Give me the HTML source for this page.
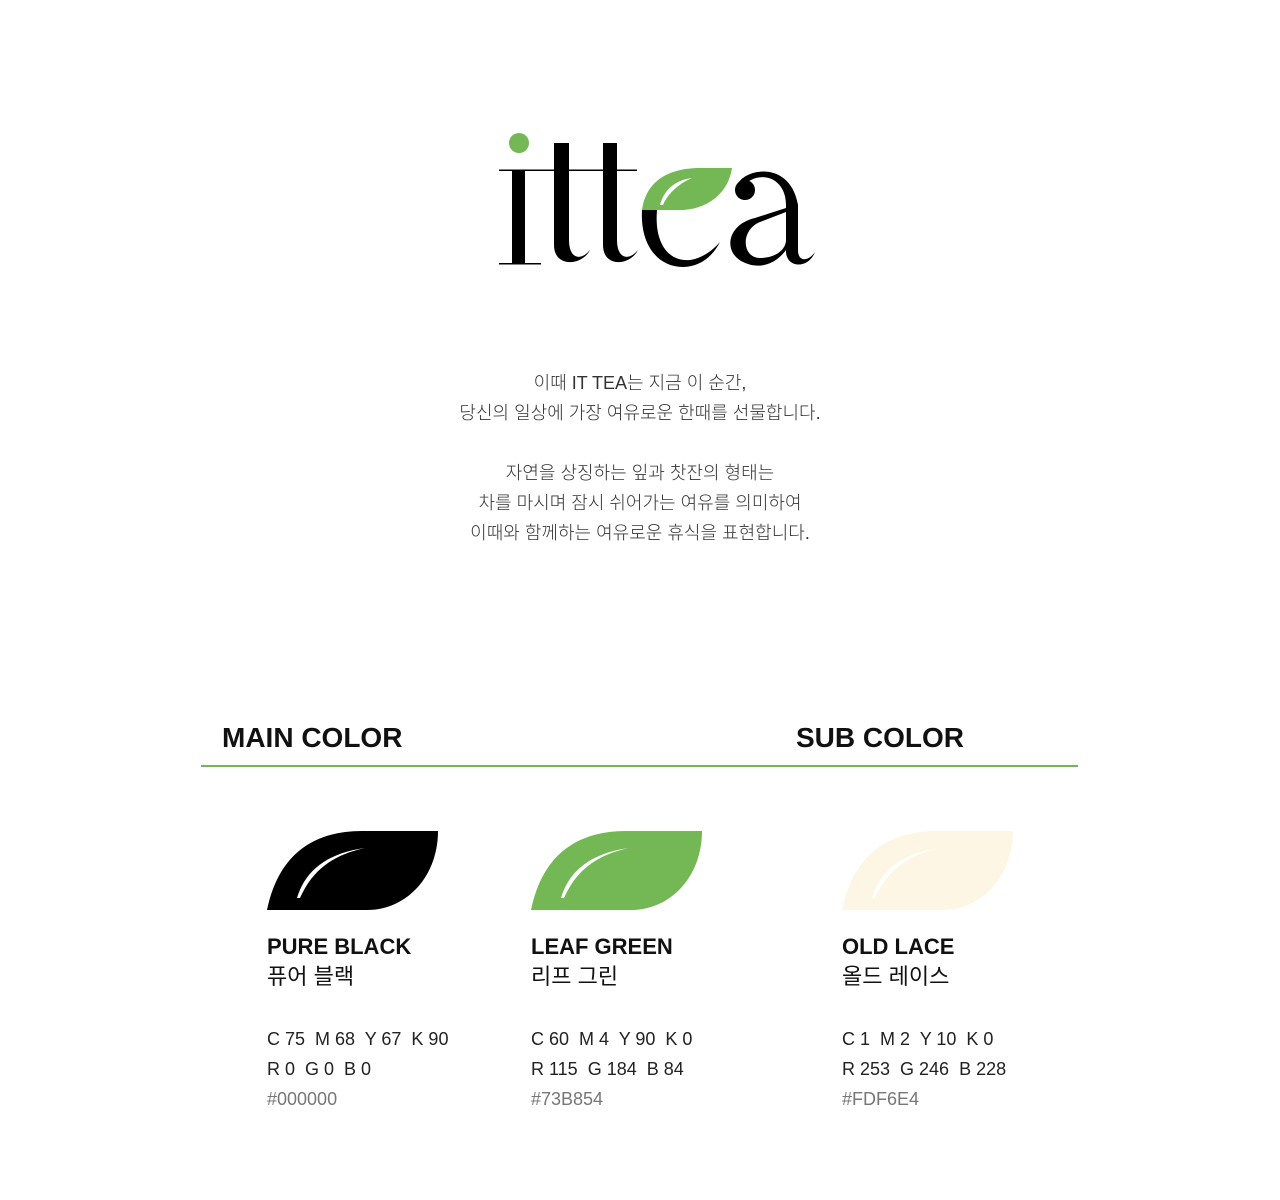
<!DOCTYPE html>
<html><head><meta charset="utf-8"><style>
body{margin:0;background:#fff;width:1280px;height:1200px;position:relative;font-family:"Liberation Sans","Noto Sans CJK KR",sans-serif;color:#111}
.a{position:absolute;white-space:nowrap}
.p{left:0;width:1280px;text-align:center;font-size:18px;color:#333;line-height:30px;font-weight:300}
.h{font-size:28px;font-weight:bold;color:#111}
.n{font-size:22px;font-weight:bold;line-height:30px}
.k{font-size:22px;line-height:30px}
.s{font-size:18px;line-height:30px;color:#222}
.x{color:#777}
</style></head><body>
<svg class="a" style="left:0;top:0" width="1280" height="300">
<circle cx="519" cy="143" r="10" fill="#73B854"/>
<rect x="499" y="169.5" width="138" height="1.5" fill="#000"/>
<rect x="512" y="170" width="13" height="94" fill="#000"/>
<rect x="499" y="263" width="42" height="1.5" fill="#000"/>
<path d="M554,143 H569 V240 C569,258 580,262 590,250 C582,266 554,268 554,245 Z" fill="#000"/>
<path d="M603,143 H617 V240 C617,258 628,262 638,250 C630,266 603,268 603,245 Z" fill="#000"/>
<path d="M642,210 C646,180 670,168 700,168 L732,168 C728,195 705,210 680,210 Z" fill="#73B854"/>
<path d="M660,205 C664,190 675,180 692,178 C680,183 668,193 663,205 Z" fill="#fff"/>
<path d="M642,210 H657 C654,245 670,262 690,260 C703,258 713,250 720,242 C712,258 698,267 683,267 C658,267 640,245 642,210 Z" fill="#000"/>
<circle cx="745" cy="190" r="10" fill="#000"/>
<path d="M737,185 C745,168 790,160 798,205 L798,250 C798,262 808,262 815,252 C808,270 785,268 786,250 C775,265 760,268 748,264 C722,256 725,225 755,218 L786,208 L786,212 L760,222 C740,230 742,258 760,258 C775,258 786,250 786,240 L786,205 C786,175 755,168 740,190 Z" fill="#000"/>
</svg>
<div class="a p" style="top:368px">이때 IT TEA는 지금 이 순간,<br>당신의 일상에 가장 여유로운 한때를 선물합니다.</div>
<div class="a p" style="top:458px">자연을 상징하는 잎과 찻잔의 형태는<br>차를 마시며 잠시 쉬어가는 여유를 의미하여<br>이때와 함께하는 여유로운 휴식을 표현합니다.</div>
<div class="a h" style="left:222px;top:722px">MAIN COLOR</div>
<div class="a h" style="left:796px;top:722px">SUB COLOR</div>
<div class="a" style="left:201px;top:765px;width:877px;height:2px;background:#73B854"></div>
<svg class="a" style="left:267px;top:831px" width="172" height="80"><path d="M0,79 C10,30 40,0 95,0 L171,0 C171,45 140,79 100,79 Z" fill="#000"/><path d="M30,67 C38,40 60,22 98,17 C65,24 45,40 33,67 Z" fill="#fff"/></svg>
<svg class="a" style="left:531px;top:831px" width="172" height="80"><path d="M0,79 C10,30 40,0 95,0 L171,0 C171,45 140,79 100,79 Z" fill="#73B854"/><path d="M30,67 C38,40 60,22 98,17 C65,24 45,40 33,67 Z" fill="#fff"/></svg>
<svg class="a" style="left:842px;top:831px" width="172" height="80"><path d="M0,79 C10,30 40,0 95,0 L171,0 C171,45 140,79 100,79 Z" fill="#FDF6E4"/><path d="M30,67 C38,40 60,22 98,17 C65,24 45,40 33,67 Z" fill="#fff"/></svg>
<div class="a" style="left:267px;top:932px"><div class="n">PURE BLACK</div><div class="k">퓨어 블랙</div></div>
<div class="a" style="left:531px;top:932px"><div class="n">LEAF GREEN</div><div class="k">리프 그린</div></div>
<div class="a" style="left:842px;top:932px"><div class="n">OLD LACE</div><div class="k">올드 레이스</div></div>
<div class="a s" style="left:267px;top:1024px">C 75&nbsp; M 68&nbsp; Y 67&nbsp; K 90<br>R 0&nbsp; G 0&nbsp; B 0<br><span class="x">#000000</span></div>
<div class="a s" style="left:531px;top:1024px">C 60&nbsp; M 4&nbsp; Y 90&nbsp; K 0<br>R 115&nbsp; G 184&nbsp; B 84<br><span class="x">#73B854</span></div>
<div class="a s" style="left:842px;top:1024px">C 1&nbsp; M 2&nbsp; Y 10&nbsp; K 0<br>R 253&nbsp; G 246&nbsp; B 228<br><span class="x">#FDF6E4</span></div>
</body></html>
